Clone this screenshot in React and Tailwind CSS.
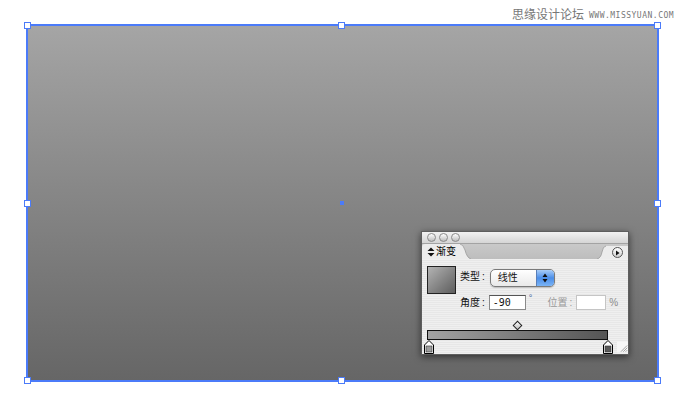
import React from 'react';

const cjk = { fontFamily: '"Liberation Sans", "Noto Sans CJK SC", sans-serif' };

function Handle({ x, y }) {
  return (
    <div
      className="absolute w-[7px] h-[7px] bg-white border border-[#4b7bf9]"
      style={{ left: x - 3, top: y - 3 }}
    />
  );
}

function Stop({ fill }) {
  return (
    <svg width="10" height="14" viewBox="0 0 10 14">
      <path d="M5 0.5 L9.5 5 L9.5 13.5 L0.5 13.5 L0.5 5 Z" fill="#fff" stroke="#000" strokeWidth="1" />
      <rect x="2" y="6" width="6" height="6" fill={fill} stroke="#333" strokeWidth="0.6" />
    </svg>
  );
}

export default function App() {
  const handles = [
    [27, 25], [341, 25], [657, 25],
    [27, 203], [657, 203],
    [27, 380], [341, 380], [657, 380],
  ];

  return (
    <div className="relative w-[686px] h-[411px] bg-white overflow-hidden">
      {/* watermark */}
      <div className="absolute left-[512px] top-[6px] flex items-center gap-[5px] text-[#777777]">
        <span className="text-[12px] leading-[16px]" style={cjk}>思缘设计论坛</span>
        <span className="text-[8px] leading-[16px] tracking-[0.5px] mt-[2px]" style={{ fontFamily: '"DejaVu Sans Mono", monospace' }}>WWW.MISSYUAN.COM</span>
      </div>

      {/* selected gradient rectangle on the artboard */}
      <div className="absolute left-[26px] top-[24px] w-[633px] h-[358px] border-2 border-[#4b7bf9] bg-gradient-to-b from-[#a5a5a5] to-[#666666]" />
      {handles.map(([x, y], i) => <Handle key={i} x={x} y={y} />)}
      <div className="absolute left-[340px] top-[201px] w-[4px] h-[4px] bg-[#4b7bf9]" />

      {/* gradient palette */}
      <div className="absolute left-[421px] top-[231px] w-[208px] h-[124px] border border-[#5e5e5e] bg-[#ececec] shadow-[0_2px_7px_rgba(0,0,0,0.55)] flex flex-col" style={cjk}>
        {/* title bar */}
        <div className="h-[12px] flex items-center gap-[3px] pl-[5px] bg-gradient-to-b from-[#f2f2f2] to-[#d5d5d5] border-b border-[#a3a3a3]">
          {[0, 1, 2].map(i => (
            <div key={i} className="w-[9px] h-[9px] rounded-full border border-[#8a8a8a] bg-gradient-to-b from-[#ffffff] to-[#bdbdbd]" />
          ))}
        </div>

        {/* tab row */}
        <div className="h-[15px] flex items-stretch bg-gradient-to-b from-[#c9c9c9] to-[#bdbdbd]">
          <div className="w-[38px] bg-[#ececec] rounded-tl-[3px] flex items-center pl-[5px] gap-[1px] text-[10px] leading-none text-black">
            <svg width="8" height="10" viewBox="0 0 8 10">
              <path d="M4 0.5 L7.5 4 L0.5 4 Z M4 9.5 L7.5 6 L0.5 6 Z" fill="#111" />
            </svg>
            <span>渐变</span>
          </div>
          <svg width="11" height="15" viewBox="0 0 11 15" className="shrink-0">
            <path d="M0 0 Q3 0 5 6 Q7 14 11 15 L0 15 Z" fill="#ececec" />
            <path d="M0 0 Q3 0 5 6 Q7 14 11 15" fill="none" stroke="#9a9a9a" strokeWidth="0.8" />
          </svg>
          <div className="flex-1" />
          <svg width="9" height="15" viewBox="0 0 9 15" className="shrink-0">
            <path d="M0 15 Q4 14 5 8 Q6 2 9 2 L9 15 Z" fill="#ececec" />
            <path d="M0 15 Q4 14 5 8 Q6 2 9 2" fill="none" stroke="#9a9a9a" strokeWidth="0.8" />
          </svg>
          <div className="w-[22px] bg-[#ececec] mt-[2px] flex items-center justify-center">
            <div className="w-[11px] h-[11px] rounded-full border border-[#555] bg-gradient-to-b from-[#ffffff] to-[#cfcfcf] flex items-center justify-center">
              <svg width="5" height="6" viewBox="0 0 5 6"><path d="M1 0.5 L4.5 3 L1 5.5 Z" fill="#111" /></svg>
            </div>
          </div>
        </div>

        {/* content */}
        <div className="flex-1 flex flex-col bg-[repeating-linear-gradient(to_bottom,#efefef_0px,#efefef_1px,#e7e7e7_1px,#e7e7e7_2px)] pl-[5px] pt-[7px] text-[10px] text-[#111]">
          <div className="flex items-start">
            <div className="w-[29px] h-[28px] border border-[#222] bg-gradient-to-br from-[#b4b4b4] to-[#5e5e5e]" />
            <span className="ml-[4px] mt-[5px] leading-[12px]">类型<span className="ml-[2px]">:</span></span>
            <div className="ml-[5px] mt-[3px] w-[65px] h-[18px] rounded-[5px] border border-[#7a7a7a] bg-gradient-to-b from-[#ffffff] to-[#e9e9e9] flex overflow-hidden shadow-[0_1px_1px_rgba(0,0,0,0.2)]">
              <span className="flex-1 pl-[7px] leading-[16px]">线性</span>
              <div className="w-[18px] bg-gradient-to-b from-[#a8cdf8] via-[#4b8ee8] to-[#7ab3f5] border-l border-[#5a7fb8] flex items-center justify-center">
                <svg width="6" height="10" viewBox="0 0 6 10"><path d="M3 0.5 L5.5 4 L0.5 4 Z M3 9.5 L5.5 6 L0.5 6 Z" fill="#111" /></svg>
              </div>
            </div>
          </div>

          <div className="flex items-start mt-[1px] pl-[33px]">
            <span className="mt-[2px] leading-[12px]">角度<span className="ml-[2px]">:</span></span>
            <div className="ml-[4px] w-[37px] h-[15px] bg-white border border-[#8a8a8a] border-t-[#555] pl-[3px] text-[10px] leading-[13px]" style={{ fontFamily: '"DejaVu Sans Mono", monospace' }}>-90</div>
            <span className="ml-[3px] -mt-[1px] text-[9px] leading-[9px] text-[#3a5a9a]">°</span>
            <span className="ml-[15px] mt-[2px] leading-[12px] text-[#9a9a9a]">位置<span className="ml-[2px]">:</span></span>
            <div className="ml-[4px] w-[30px] h-[15px] bg-white border border-[#c5c5c5]" />
            <span className="ml-[3px] mt-[2px] leading-[12px] text-[#8a8a8a]">%</span>
          </div>

          <div className="flex flex-col mt-[12px]">
            <div className="ml-[87px] w-[7px] h-[7px] rotate-45 border border-[#222] bg-gradient-to-br from-[#ffffff] to-[#bbbbbb]" />
            <div className="mt-[1px] w-[181px] h-[10px] border border-[#111] bg-gradient-to-r from-[#a3a3a3] to-[#555555]" />
            <div className="flex items-end">
              <div className="-ml-[3px]"><Stop fill="#9d9d9d" /></div>
              <div className="ml-[169px]"><Stop fill="#5a5a5a" /></div>
              <svg width="14" height="14" viewBox="0 0 14 14" className="ml-[4px]">
                <rect width="14" height="14" fill="#f6f6f6" />
                <path d="M13 5 L5 13 M13 8 L8 13 M13 11 L11 13" stroke="#8a8a8a" strokeWidth="1" />
              </svg>
            </div>
          </div>
        </div>
      </div>
    </div>
  );
}
